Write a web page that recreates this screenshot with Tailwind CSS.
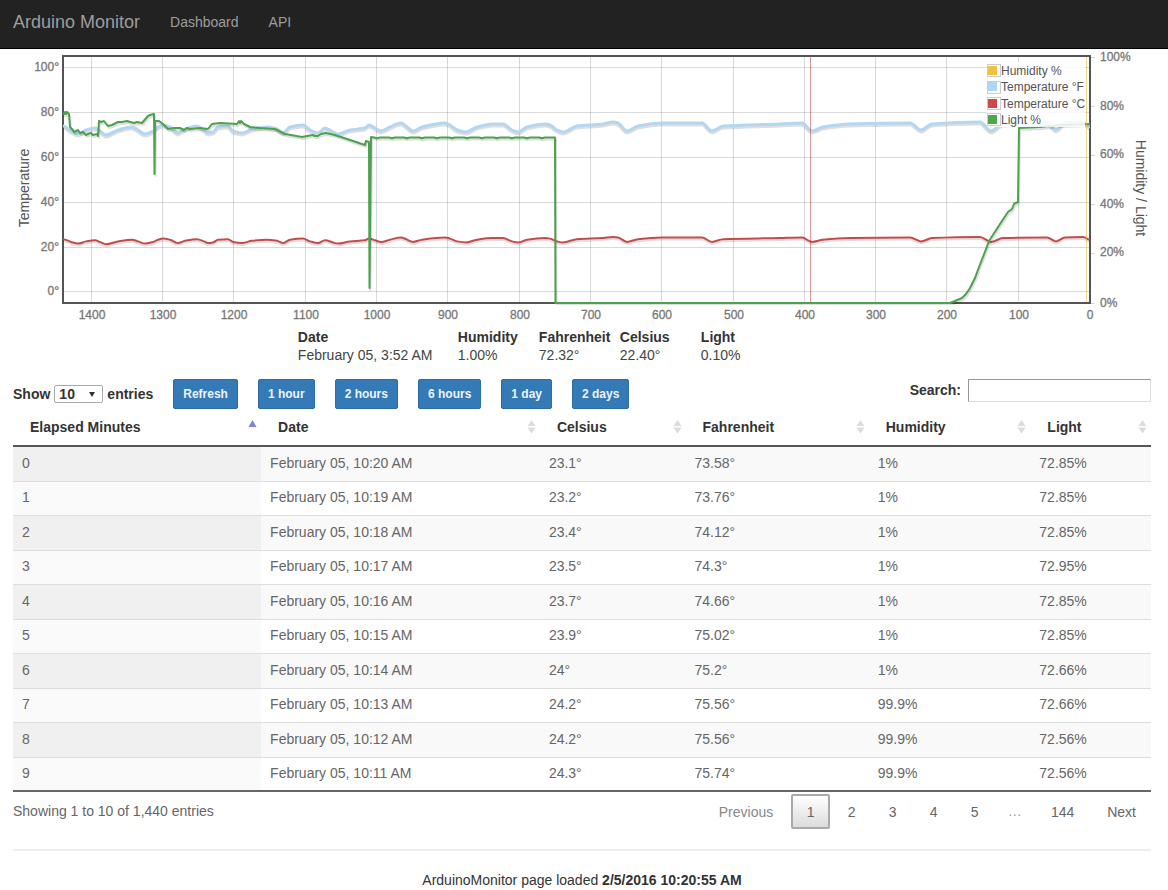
<!DOCTYPE html>
<html lang="en">
<head>
<meta charset="utf-8">
<title>Arduino Monitor</title>
<script src="https://cdn.jsdelivr.net/npm/@tailwindcss/browser@4"></script>
</head>
<body class="bg-white font-['Liberation_Sans',Arial,sans-serif] text-sm text-[#333]">
<nav class="flex items-center gap-[30px] border-b border-black bg-[#222] px-[13px] pt-2 pb-3 text-[#9d9d9d]">
  <a href="#" class="text-lg leading-7">Arduino Monitor</a>
  <a href="#">Dashboard</a>
  <a href="#">API</a>
</nav>

<main>
  <svg id="chart" viewBox="0 49 1168 275" class="block h-auto w-full" role="img" aria-label="Temperature, humidity and light history">
    <defs>
      <clipPath id="plot"><rect x="63" y="56" width="1027" height="249"/></clipPath>
      <path id="right-ticks" d="M1091 57.5h4M1091 106.5h4M1091 155.5h4M1091 204.5h4M1091 253.5h4M1091 303.5h4"/>
    </defs>
    <g id="grid" stroke="#545454" stroke-opacity=".22" fill="none"><use href="#right-ticks"/></g>
    <rect x="63" y="56" width="1027" height="247" fill="none" stroke="#545454" stroke-width="2"/>
    <g clip-path="url(#plot)" fill="none" stroke-linejoin="round">
      <path id="f-shadow" stroke="#000" stroke-opacity=".13" stroke-width="3" transform="translate(0 2)"/>
      <path id="f-line" stroke="#b3d6f1" stroke-width="3"/>
      <path id="c-shadow" stroke="#000" stroke-opacity=".13" stroke-width="2" transform="translate(0 2)"/>
      <path id="c-line" stroke="#c24b4b" stroke-width="2"/>
      <path id="l-shadow" stroke="#000" stroke-opacity=".13" stroke-width="2" transform="translate(1 2)"/>
      <path id="l-line" stroke="#4da04d" stroke-width="2"/>
      <path d="M1086.5 57V302" stroke="#edc240" stroke-opacity=".6"/>
      <path d="M810.5 57V302" stroke="#aa0000" stroke-opacity=".4"/>
    </g>
    <g font-size="12" fill="#545454">
      <rect x="987" y="62" width="98" height="65" fill="#fff" fill-opacity=".85"/>
      <g stroke="#ccc" fill="#fff">
        <rect x="987.5" y="64.5" width="13" height="12"/><rect x="987.5" y="81.5" width="13" height="12"/>
        <rect x="987.5" y="97.5" width="13" height="12"/><rect x="987.5" y="113.5" width="13" height="12"/>
      </g>
      <rect x="988" y="66" width="9" height="9" fill="#edc240"/><text x="1001" y="75">Humidity %</text>
      <rect x="988" y="82" width="9" height="9" fill="#afd8f8"/><text x="1001" y="91">Temperature °F</text>
      <rect x="988" y="99" width="9" height="9" fill="#cb4b4b"/><text x="1001" y="108">Temperature °C</text>
      <rect x="988" y="115" width="9" height="9" fill="#4da74d"/><text x="1001" y="124">Light %</text>
    </g>
    <g font-size="12" fill="#777" stroke="#777" stroke-width=".3">
      <g id="x-labels" text-anchor="middle"></g>
      <g text-anchor="end">
        <text x="59" y="71">100°</text><text x="59" y="116">80°</text><text x="59" y="161">60°</text>
        <text x="59" y="206">40°</text><text x="59" y="251">20°</text><text x="59" y="295">0°</text>
      </g>
      <text x="1100" y="61">100%</text><text x="1100" y="110">80%</text><text x="1100" y="158">60%</text>
      <text x="1100" y="208">40%</text><text x="1100" y="256">20%</text><text x="1100" y="307">0%</text>
    </g>
    <g font-size="14" fill="#545454" text-anchor="middle">
      <text transform="translate(29 188) rotate(-90)">Temperature</text>
      <text transform="translate(1136 188) rotate(90)">Humidity / Light</text>
    </g>
  </svg>

  <table class="mt-1 ml-[25.5%] text-left leading-[18px]">
    <thead><tr><th class="w-40">Date</th><th class="w-[81px]">Humidity</th><th class="w-[81px]">Fahrenheit</th><th class="w-[81px]">Celsius</th><th>Light</th></tr></thead>
    <tbody class="text-[#444]"><tr><td>February 05, 3:52 AM</td><td>1.00%</td><td>72.32°</td><td>22.40°</td><td>0.10%</td></tr></tbody>
  </table>

  <section class="mt-[15px] pr-[17px] pl-[13px]">
    <div class="flex items-start justify-between">
      <div class="flex items-center gap-5">
        <label class="flex items-center gap-1 font-bold">Show
          <span class="relative">
            <select class="block h-[18px] w-[49px] appearance-none rounded-xs border border-[#a9a9a9] bg-white pl-1 text-sm leading-4 font-bold"><option>10</option><option>25</option><option>50</option><option>100</option></select>
            <svg viewBox="0 0 6 5" class="pointer-events-none absolute top-[7px] right-2 h-[5px] w-[6px]" fill="#333"><path d="M0 0h6L3 5z"/></svg>
          </span>
          entries</label>
        <div class="flex gap-5 text-xs font-bold text-[#eef4fa]">
          <button class="h-[30px] rounded-xs border border-[#2e6da4] bg-[#337ab7] px-[9px]">Refresh</button>
          <button class="h-[30px] rounded-xs border border-[#2e6da4] bg-[#337ab7] px-[9px]">1 hour</button>
          <button class="h-[30px] rounded-xs border border-[#2e6da4] bg-[#337ab7] px-[9px]">2 hours</button>
          <button class="h-[30px] rounded-xs border border-[#2e6da4] bg-[#337ab7] px-[9px]">6 hours</button>
          <button class="h-[30px] rounded-xs border border-[#2e6da4] bg-[#337ab7] px-[9px]">1 day</button>
          <button class="h-[30px] rounded-xs border border-[#2e6da4] bg-[#337ab7] px-[9px]">2 days</button>
        </div>
      </div>
      <label class="flex items-start gap-[7px] leading-[22px] font-bold">Search:
        <input type="search" class="h-[23px] w-[183px] border border-[#ddd] border-t-[#999] border-l-[#999] px-1 font-normal"></label>
    </div>

    <table class="w-full table-fixed border-b-2 border-[#666] text-left text-[#666]">
      <colgroup><col class="w-[21.8%]"><col class="w-[24.5%]"><col class="w-[12.8%]"><col class="w-[16.1%]"><col class="w-[14.2%]"><col></colgroup>
      <thead class="text-[#333]"><tr id="head" class="h-[37px] border-b-2 border-[#555]"></tr></thead>
      <tbody id="rows"></tbody>
    </table>

    <div class="flex items-start justify-between text-[#666]">
      <p class="pt-[9px] leading-5">Showing 1 to 10 of 1,440 entries</p>
      <div class="flex gap-[2px] pt-[2px]">
        <button class="h-[35px] px-4 text-[#888]" disabled>Previous</button>
        <button class="h-[35px] w-[39px] rounded-xs border-2 border-[#aaa] bg-linear-to-b from-white to-[#dcdcdc]" aria-current="page">1</button>
        <button class="h-[35px] w-[39px]">2</button>
        <button class="h-[35px] w-[39px]">3</button>
        <button class="h-[35px] w-[39px]">4</button>
        <button class="h-[35px] w-[39px]">5</button>
        <span class="w-[37px] text-center leading-[35px] text-[#999]">…</span>
        <button class="h-[35px] w-[55px]">144</button>
        <button class="h-[35px] px-[15px]">Next</button>
      </div>
    </div>
    <hr class="mt-5 border-t-2 border-[#eee]">
  </section>
</main>

<footer class="pt-[19px] pr-1 text-center leading-5">ArduinoMonitor page loaded <b>2/5/2016 10:20:55 AM</b></footer>

<script>
// Temperature trace in Fahrenheit, as plotted points; Celsius is derived from it.
const fahrenheit = [[63,126],[71,131],[78,134],[86,130],[95,128],[100,131],[106,135],[118,130],[132,127],[138,130],[145,134],[153,131],[158,127],[163,125],[170,127],[178,133],[185,129],[197,126],[204,130],[208,133],[213,132],[218,127],[228,126],[233,131],[242,133],[252,129],[267,127],[277,129],[283,133],[290,127],[303,125],[310,130],[318,133],[325,128],[333,132],[338,134],[350,130],[365,128],[369,125],[375,128],[381,131],[390,127],[401,123],[406,126],[413,131],[422,127],[445,123],[450,125],[457,130],[466,132],[477,127],[493,124],[503,124],[512,130],[518,132],[527,127],[545,124],[550,125],[557,130],[563,132],[577,126],[603,124],[613,122],[618,123],[627,131],[638,126],[662,123],[702,123],[712,131],[723,126],[780,124],[802,123],[812,131],[823,127],[850,124],[910,123],[921,130],[932,124],[980,122],[991,131],[1003,124],[1047,123],[1056,130],[1065,123],[1083,122],[1090,127]];
const light = [[63,113],[64,114],[65,112],[66,114],[67,112],[69,114],[70,127],[73,130],[74,132],[76,131],[78,130],[80,133],[83,132],[86,135],[88,134],[91,133],[93,135],[97,134],[98,136],[99,121],[101,122],[104,121],[108,126],[112,125],[118,122],[122,122],[127,121],[134,123],[137,122],[142,123],[148,116],[150,115],[154,114],[154.5,174],[155,121],[159,121],[163,124],[168,129],[174,128],[180,128],[184,130],[187,128],[190,129],[200,128],[208,129],[212,124],[220,123],[237,124],[239,121],[240,123],[241,121],[244,124],[250,127],[260,128],[275,129],[285,134],[302,137],[307,136],[313,135],[315,136],[318,136],[321,134],[326,133],[335,135],[350,140],[365,145],[366,141],[369,142],[369.5,288],[371,137]];
for (let x = 374; x < 555; x += 3) light.push([x, 137.5 + (x * 7 % 5 > 3 ? .7 : 0)]);
light.push([555,137.5],[555.5,303],[950,303],[955,301],[962,298],[966,294],[970,288],[975,278],[979,267],[983,257],[989,241],[1002,221],[1008,212],[1012,209],[1014,204],[1018,202],[1019,128],[1040,127],[1060,125],[1090,124]);

const line = points => 'M' + points.map(p => p.join(' ')).join('L');
// Horizontal-tangent cubic segments where the trace turns, straight slopes elsewhere.
const curve = points => {
  const slope = points.map(([x, y], i) => {
    const a = points[i - 1], b = points[i + 1];
    if (!a || !b || (y - a[1]) * (b[1] - y) <= 0) return 0;
    const s = (y - a[1]) / (x - a[0]), t = (b[1] - y) / (b[0] - x);
    return 2 * s * t / (s + t);
  });
  return 'M' + points[0].join(' ') + points.slice(1).map(([x, y], i) => {
    const [px, py] = points[i], d = (x - px) / 3;
    return `C${px + d} ${py + slope[i] * d} ${x - d} ${y - slope[i + 1] * d} ${x} ${y}`;
  }).join('');
};
const celsius = fahrenheit.map(([x, y]) => [x, 291 - (219.3 - y) / 1.8]);
for (const [name, d] of [['f', curve(fahrenheit)], ['c', curve(celsius)], ['l', line(light)]])
  for (const part of ['-shadow', '-line'])
    document.getElementById(name + part).setAttribute('d', d);

let grid = '';
let labels = '';
for (let i = 0; i <= 14; i++) {
  const x = Math.round(1090 - i * 71.3);
  if (i) grid += `M${x - .5} 57V302`;
  labels += `<text x="${x}" y="319">${i * 100}</text>`;
}
for (const y of [67, 112, 157, 202, 247, 291]) grid += `M64 ${y + .5}H1089`;
document.getElementById('grid').insertAdjacentHTML('beforeend', `<path d="${grid}"/>`);
document.getElementById('x-labels').innerHTML = labels;

const up = '<svg viewBox="0 0 9 14" class="h-[14px] w-[9px]"><path d="M.5 7l4-7 4 7z" fill="#8080dd"/></svg>';
const both = '<svg viewBox="0 0 9 14" class="h-[14px] w-[9px]"><path d="M.5 6l4-6 4 6zM.5 7.500h8l-4 6z" fill="#dcdcdc"/></svg>';
document.getElementById('head').innerHTML = ['Elapsed Minutes', 'Date', 'Celsius', 'Fahrenheit', 'Humidity', 'Light']
  .map((t, i) => `<th class="p-0"><button class="flex w-full items-center justify-between pr-1 pl-[17px] font-bold">${t}${i ? both : up}</button></th>`).join('');

const rows = [
  ['10:20', '23.1', '73.58', '1', '72.85'], ['10:19', '23.2', '73.76', '1', '72.85'],
  ['10:18', '23.4', '74.12', '1', '72.85'], ['10:17', '23.5', '74.3', '1', '72.95'],
  ['10:16', '23.7', '74.66', '1', '72.85'], ['10:15', '23.9', '75.02', '1', '72.85'],
  ['10:14', '24', '75.2', '1', '72.66'], ['10:13', '24.2', '75.56', '99.9', '72.66'],
  ['10:12', '24.2', '75.56', '99.9', '72.56'], ['10:11', '24.3', '75.74', '99.9', '72.56']];
document.getElementById('rows').innerHTML = rows.map(([t, c, f, h, l], i) =>
  `<tr class="border-b border-[#ddd] odd:h-[35px] even:h-[34px] odd:bg-[#f9f9f9] last:border-b-2 last:border-[#666]">
    <td class="${i % 2 ? 'bg-[#fafafa]' : 'bg-[#f0f0f0]'} px-[9px] pb-[2px]">${i}</td>
    <td class="px-[9px] pb-[2px]">February 05, ${t} AM</td><td class="px-[9px] pb-[2px]">${c}°</td><td class="px-[9px] pb-[2px]">${f}°</td>
    <td class="px-[9px] pb-[2px]">${h}%</td><td class="px-[9px] pb-[2px]">${l}%</td></tr>`).join('');
</script>
</body>
</html>
